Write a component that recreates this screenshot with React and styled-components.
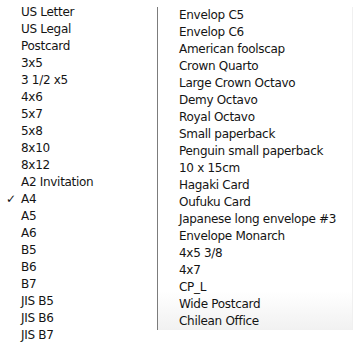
import styled, { createGlobalStyle } from "styled-components";

const GlobalStyle = createGlobalStyle`
  html, body {
    margin: 0;
    padding: 0;
    background: #ffffff;
  }
  body {
    font-family: "DejaVu Sans", "Liberation Sans", sans-serif;
  }
`;

const Menu = styled.div`
  display: flex;
  width: 359px;
  height: 344px;
  overflow: hidden;
  background: #ffffff;
`;

const Column = styled.div`
  display: flex;
  flex-direction: column;
  width: ${(props) => props.width}px;
  padding-top: ${(props) => props.top}px;
  box-sizing: border-box;
`;

const RightColumn = styled(Column)`
  margin-top: 7px;
  height: 323px;
  border-left: 1px solid #7c7c7c;
  border-right: 1px solid #f0f0f0;
  background: linear-gradient(to bottom, #ffffff 0%, #ffffff 88%, #f1f1f1 100%);
`;

const Item = styled.div`
  position: relative;
  height: 17px;
  line-height: 17px;
  padding-left: ${(props) => props.indent}px;
  font-size: 12px;
  letter-spacing: -0.3px;
  color: #141414;
  white-space: nowrap;
`;

const Check = styled.span`
  position: absolute;
  left: 6px;
  top: 0;
  font-size: 12px;
`;

const left = [
  "US Letter",
  "US Legal",
  "Postcard",
  "3x5",
  "3 1/2 x5",
  "4x6",
  "5x7",
  "5x8",
  "8x10",
  "8x12",
  "A2 Invitation",
  "A4",
  "A5",
  "A6",
  "B5",
  "B6",
  "B7",
  "JIS B5",
  "JIS B6",
  "JIS B7",
];

const right = [
  "Envelop C5",
  "Envelop C6",
  "American foolscap",
  "Crown Quarto",
  "Large Crown Octavo",
  "Demy Octavo",
  "Royal Octavo",
  "Small paperback",
  "Penguin small paperback",
  "10 x 15cm",
  "Hagaki Card",
  "Oufuku Card",
  "Japanese long envelope #3",
  "Envelope Monarch",
  "4x5 3/8",
  "4x7",
  "CP_L",
  "Wide Postcard",
  "Chilean Office",
];

const App = () => {
  return (
    <>
      <GlobalStyle />
      <Menu>
        <Column width={157} top={4}>
          {left.map((name) => (
            <Item key={name} indent={21}>
              {name === "A4" && <Check>✓</Check>}
              {name}
            </Item>
          ))}
        </Column>
        <RightColumn width={196} top={0}>
          {right.map((name) => (
            <Item key={name} indent={21}>
              {name}
            </Item>
          ))}
        </RightColumn>
      </Menu>
    </>
  );
};

export default App;
